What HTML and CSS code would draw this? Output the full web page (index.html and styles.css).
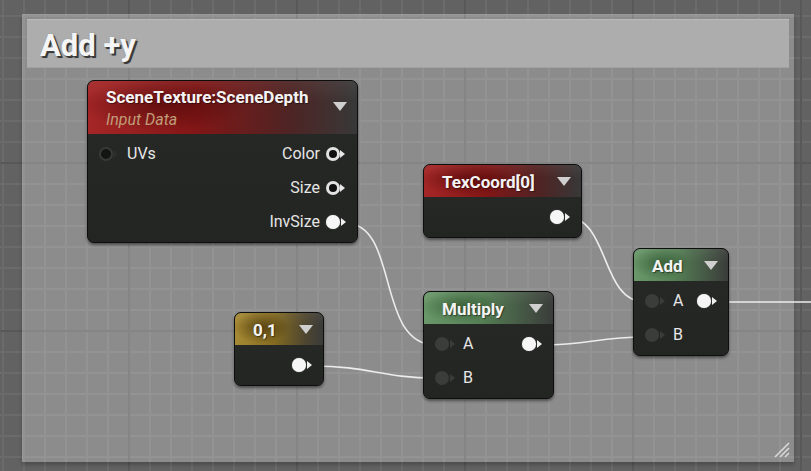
FILE: index.html
```html
<!DOCTYPE html>
<html>
<head>
<meta charset="utf-8">
<link rel="stylesheet" href="styles.css">
</head>
<body>
<div class="canvas">
  <div class="comment">
    <div class="comment-head">Add +y</div>
    <svg class="resize" width="20" height="20" viewBox="0 0 20 20">
      <path d="M4 18 L18 4 M9 18 L18 9 M14 18 L18 14" stroke="#d8d8d8" stroke-width="1.6" fill="none"/>
    </svg>
  </div>

  <svg class="wires" width="811" height="471" viewBox="0 0 811 471">
    <path d="M345 223 C 400 223, 375 345, 436 345"/>
    <path d="M312 366 C 370 366, 380 378, 436 378"/>
    <path d="M542 345 C 590 345, 597 337, 645 337"/>
    <path d="M566 217 C 610 217, 600 302, 645 302"/>
    <path d="M717 302 L 811 302"/>
  </svg>

  <div class="node n-scene">
    <div class="node-head red tall">
      <div class="titles">
        <div class="title">SceneTexture:SceneDepth</div>
        <div class="subtitle">Input Data</div>
      </div>
      <span class="caret"></span>
    </div>
    <div class="node-body">
      <div class="row">
        <div class="side"><span class="pin hollow-dark"></span><span class="label">UVs</span></div>
        <div class="side"><span class="label">Color</span><span class="pin ring"></span></div>
      </div>
      <div class="row end">
        <div class="side"><span class="label">Size</span><span class="pin ring"></span></div>
      </div>
      <div class="row end">
        <div class="side"><span class="label">InvSize</span><span class="pin filled"></span></div>
      </div>
    </div>
  </div>

  <div class="node n-texcoord">
    <div class="node-head red">
      <div class="title">TexCoord[0]</div>
      <span class="caret"></span>
    </div>
    <div class="node-body">
      <div class="row end">
        <div class="side"><span class="pin filled"></span></div>
      </div>
    </div>
  </div>

  <div class="node n-add">
    <div class="node-head green">
      <div class="title">Add</div>
      <span class="caret"></span>
    </div>
    <div class="node-body">
      <div class="row">
        <div class="side"><span class="pin dim"></span><span class="label">A</span></div>
        <div class="side"><span class="pin filled"></span></div>
      </div>
      <div class="row">
        <div class="side"><span class="pin dim"></span><span class="label">B</span></div>
      </div>
    </div>
  </div>

  <div class="node n-multiply">
    <div class="node-head green">
      <div class="title">Multiply</div>
      <span class="caret"></span>
    </div>
    <div class="node-body">
      <div class="row">
        <div class="side"><span class="pin dim"></span><span class="label">A</span></div>
        <div class="side"><span class="pin filled"></span></div>
      </div>
      <div class="row">
        <div class="side"><span class="pin dim"></span><span class="label">B</span></div>
      </div>
    </div>
  </div>

  <div class="node n-const">
    <div class="node-head gold">
      <div class="title">0,1</div>
      <span class="caret"></span>
    </div>
    <div class="node-body">
      <div class="row end">
        <div class="side"><span class="pin filled"></span></div>
      </div>
    </div>
  </div>
</div>
</body>
</html>
```

FILE: styles.css
```css
html, body {
  margin: 0;
  padding: 0;
  background: #626262;
}

.canvas {
  position: relative;
  width: 811px;
  height: 471px;
  overflow: hidden;
  font-family: Roboto, "Noto Sans", sans-serif;
  background-color: #626262;
  background-image:
    linear-gradient(to right, #585858 2px, transparent 2px),
    linear-gradient(to bottom, #585858 2px, transparent 2px),
    linear-gradient(to right, #6b6b6b 2px, transparent 2px),
    linear-gradient(to bottom, #6b6b6b 2px, transparent 2px);
  background-size: 168px 168px, 168px 168px, 21px 21px, 21px 21px;
  background-position: 128px 0, 0 162px, 2px 0, 0 15px;
}

/* comment box */
.comment {
  position: absolute;
  left: 22px;
  top: 14px;
  width: 772px;
  height: 448px;
  box-sizing: border-box;
  padding: 4px 5px 4px 4px;
  background: rgba(255, 255, 255, 0.27);
  border-top: 1px solid rgba(255, 255, 255, 0.12);
  border-left: 1px solid rgba(255, 255, 255, 0.08);
  box-shadow: 0 3px 4px rgba(0, 0, 0, 0.22);
}

.comment-head {
  height: 49px;
  box-sizing: border-box;
  padding: 3px 0 0 13px;
  line-height: 45px;
  background: #adadad;
  border-top: 1px solid #b9b9b9;
  border-bottom: 1px solid #a2a2a2;
  color: #f5f5f5;
  font-size: 31px;
  font-weight: 700;
  text-shadow: 2px 2px 0 #3a3a3a, 1px 1px 2px rgba(0, 0, 0, 0.5);
}

.resize {
  position: absolute;
  right: 3px;
  bottom: 3px;
}

/* wires */
.wires {
  position: absolute;
  left: 0;
  top: 0;
}
.wires path {
  fill: none;
  stroke: #ececec;
  stroke-width: 1.6;
}

/* nodes */
.node {
  position: absolute;
  box-sizing: border-box;
  border: 1px solid #0e0e0e;
  border-radius: 7px;
  overflow: hidden;
  background: #252725;
  box-shadow: 0 2px 3px rgba(0, 0, 0, 0.45);
}

.n-scene    { left: 87px;  top: 80px;  width: 271px; }
.n-texcoord { left: 423px; top: 164px; width: 159px; }
.n-add      { left: 633px; top: 248px; width: 96px; }
.n-multiply { left: 423px; top: 291px; width: 131px; }
.n-const    { left: 234px; top: 312px; width: 90px; }

.node-head {
  height: 32px;
  box-sizing: border-box;
  display: flex;
  align-items: center;
  justify-content: space-between;
  padding: 0 10px 0 18px;
  color: #f4f4f4;
}
.node-head.tall {
  height: 53px;
  align-items: flex-start;
}
.node-head.tall .caret {
  margin-top: 21px;
}
.node-head.tall .titles {
  padding-top: 5px;
}

.title {
  font-size: 17px;
  font-weight: 700;
  line-height: 20px;
  padding-top: 1px;
  white-space: nowrap;
  text-shadow: 1px 1px 1px rgba(0, 0, 0, 0.45);
}
.subtitle {
  font-size: 16px;
  font-style: italic;
  line-height: 20px;
  margin-top: 3px;
  color: #c09c78;
  white-space: nowrap;
}

.caret {
  flex: none;
  width: 0;
  height: 0;
  border-left: 7.5px solid transparent;
  border-right: 7.5px solid transparent;
  border-top: 9px solid #cfcfcf;
}

.red {
  background:
    radial-gradient(ellipse 45% 70% at 28% 45%, rgba(50, 0, 0, 0.45), transparent 70%),
    linear-gradient(to bottom, rgba(255, 255, 255, 0.06), transparent 40%),
    linear-gradient(to right, #a52626 0%, #821616 40%, #4e2424 75%, #383838 100%);
}
.green {
  background:
    radial-gradient(ellipse 45% 70% at 28% 45%, rgba(0, 30, 0, 0.35), transparent 70%),
    linear-gradient(to bottom, rgba(255, 255, 255, 0.06), transparent 40%),
    linear-gradient(to right, #6a986a 0%, #547e54 45%, #445444 80%, #3a3c3a 100%);
}
.gold {
  background:
    radial-gradient(ellipse 45% 70% at 30% 45%, rgba(40, 25, 0, 0.5), transparent 70%),
    linear-gradient(to bottom, rgba(255, 255, 255, 0.06), transparent 40%),
    linear-gradient(to right, #a68a34 0%, #836a20 45%, #4e4630 80%, #3a3a38 100%);
}

.node-body {
  padding: 3px 12px 3px 11px;
  background: linear-gradient(to bottom, #262826, #232523);
}

.row {
  height: 34px;
  display: flex;
  align-items: center;
  justify-content: space-between;
}
.row.end {
  justify-content: flex-end;
}

.side {
  display: flex;
  align-items: center;
}

.label {
  font-size: 16px;
  color: #e6e6e6;
  line-height: 20px;
}
.side .pin + .label {
  margin-left: 9px;
}
.side .label + .pin {
  margin-left: 6px;
}

/* pins: circle plus small arrow */
.pin {
  position: relative;
  flex: none;
  width: 14px;
  height: 14px;
  margin-right: 5px;
  box-sizing: border-box;
  border-radius: 50%;
}
.pin::after {
  content: "";
  position: absolute;
  top: 50%;
  right: -6px;
  margin-top: -4px;
  width: 0;
  height: 0;
  border-top: 4px solid transparent;
  border-bottom: 4px solid transparent;
  border-left: 5px solid var(--tip);
}

.pin.filled {
  --tip: #f0f0f0;
  background: #f6f6f6;
  box-shadow: 0 0 1px rgba(255, 255, 255, 0.6);
}
.pin.ring {
  --tip: #e8e8e8;
  background: #101010;
  border: 3px solid #e2e2e2;
}
.pin.ring::after {
  right: -8px;
}
.pin.hollow-dark {
  --tip: #2c2e2c;
  background: #131413;
  border: 2px solid #383a38;
}
.pin.hollow-dark::after {
  right: -7px;
}
.pin.dim {
  --tip: #3a3c3a;
  background: #3b3d3b;
}
```
